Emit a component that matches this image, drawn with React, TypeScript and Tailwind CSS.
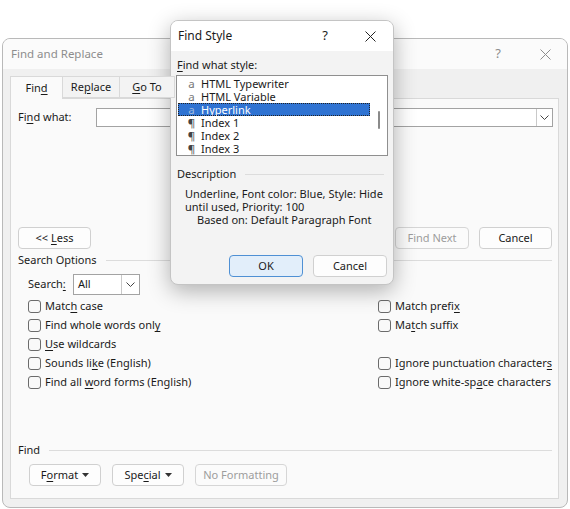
import type { ReactNode } from "react";

function CloseIcon({ className = "" }: { className?: string }) {
    return (
        <svg width="11" height="11" viewBox="0 0 11 11" className={className}>
            <path d="M0.5 0.5 L10.5 10.5 M10.5 0.5 L0.5 10.5" stroke="currentColor" strokeWidth="1" fill="none" />
        </svg>
    );
}

function Chevron() {
    return (
        <svg width="9" height="5" viewBox="0 0 9 5">
            <path d="M0.5 0.5 L4.5 4.5 L8.5 0.5" stroke="#444" strokeWidth="1" fill="none" />
        </svg>
    );
}

function Caret() {
    return (
        <svg width="7" height="4" viewBox="0 0 7 4" className="ml-[4px]">
            <path d="M0 0 H7 L3.5 4 Z" fill="#333" />
        </svg>
    );
}

function Btn({ children, className = "", disabled = false }: { children: ReactNode; className?: string; disabled?: boolean }) {
    return (
        <div
            className={`flex items-center justify-center h-[22px] rounded-[4px] border whitespace-nowrap ${
                disabled ? "border-[#d6d6d6] text-[#9d9d9d] bg-[#fbfbfb]" : "border-[#d0d0d0] text-[#1a1a1a] bg-[#fdfdfd]"
            } ${className}`}
        >
            {children}
        </div>
    );
}

function Check({ children }: { children: ReactNode }) {
    return (
        <div className="flex items-center h-[19px] whitespace-nowrap">
            <div className="w-[13px] h-[13px] shrink-0 rounded-[3px] border border-[#6b6b6b] bg-[#f9f9f9]" />
            <span className="ml-[4px]">{children}</span>
        </div>
    );
}

function SectionLabel({ children }: { children: ReactNode }) {
    return (
        <div className="flex items-center h-[16px]">
            <span>{children}</span>
            <div className="flex-1 h-px bg-[#dcdcdc] ml-[9px]" />
        </div>
    );
}

const styles = [
    { icon: "a", name: "HTML Typewriter" },
    { icon: "a", name: "HTML Variable" },
    { icon: "a", name: "Hyperlink", selected: true },
    { icon: "¶", name: "Index 1" },
    { icon: "¶", name: "Index 2" },
    { icon: "¶", name: "Index 3" },
];

function FindStyleDialog() {
    return (
        <div className="absolute left-[170px] top-[20px] w-[224px] h-[265px] rounded-[8px] border border-[#c4c4c4] bg-[#f3f3f3] overflow-hidden shadow-[0_6px_22px_rgba(0,0,0,0.30)] flex flex-col">
            <div className="h-[30px] bg-white flex items-center pl-[7px] text-[#1a1a1a]">
                <span className="text-[12px]">Find Style</span>
                <span className="ml-auto text-[13px] mr-[37px]">?</span>
                <CloseIcon className="mr-[17px] text-[#222]" />
            </div>
            <div className="flex-1 px-[5px] flex flex-col">
                <div className="mt-[6px] h-[16px] flex items-center pl-[1px]">
                    <span>
                        <u className="underline-offset-2">F</u>ind what style:
                    </span>
                </div>
                <div className="mt-[2px] h-[81px] w-[212px] border border-[#8f8f8f] bg-white flex">
                    <div className="flex-1 pt-[1px] pl-[1px]">
                        {styles.map((s) => (
                            <div
                                key={s.name}
                                className={`h-[13px] flex items-center leading-[13px] ${
                                    s.selected ? "bg-[#2f73d2] text-white outline-1 outline-dotted outline-[#222] -outline-offset-1" : ""
                                }`}
                            >
                                <span
                                    className={`w-[23px] text-center text-[11.5px] leading-[13px] pl-[4px] ${
                                        s.selected ? "text-[#9fb9dd]" : s.icon === "a" ? "text-[#777]" : "text-[#444]"
                                    }`}
                                >
                                    {s.icon}
                                </span>
                                <span>{s.name}</span>
                            </div>
                        ))}
                    </div>
                    <div className="w-[17px] flex justify-center">
                        <div className="mt-[35px] w-[2px] h-[18px] rounded-full bg-[#8a8a8a]" />
                    </div>
                </div>
                <div className="mt-[10px] pl-[1px] pr-[4px]">
                    <SectionLabel>Description</SectionLabel>
                </div>
                <div className="mt-[5px] pl-[9px] leading-[13px] whitespace-nowrap">
                    <div>Underline, Font color: Blue, Style: Hide</div>
                    <div>until used, Priority: 100</div>
                    <div className="pl-[12px]">Based on: Default Paragraph Font</div>
                </div>
                <div className="mt-auto mb-[7px] flex justify-end gap-[10px] pr-[1px]">
                    <div className="w-[74px] h-[22px] rounded-[4px] border border-[#4f90d4] bg-[#e2eefa] flex items-center justify-center">
                        OK
                    </div>
                    <Btn className="w-[74px]">Cancel</Btn>
                </div>
            </div>
        </div>
    );
}

export default function App() {
    return (
        <div className="relative min-h-screen bg-white pt-[38px] pl-[2px] text-[11px] text-[#1a1a1a] font-['Noto_Sans',sans-serif]">
            <div className="w-[566px] h-[470px] rounded-[8px] border border-[#b9b9b9] bg-[#f0f0f0] overflow-hidden flex flex-col">
                <div className="h-[30px] bg-[#fbfbfb] flex items-center pl-[8px] text-[#8d8d8d]">
                    <span className="text-[11.5px]">Find and Replace</span>
                    <span className="ml-auto text-[13px] mr-[39px]">?</span>
                    <CloseIcon className="mr-[16px] text-[#8d8d8d]" />
                </div>
                <div className="flex-1 pt-[7px] pl-[7px] pr-[8px] pb-[8px] flex flex-col">
                    <div className="flex h-[22px] relative z-10">
                        <div className="w-[53px] h-[23px] border border-b-0 border-[#d9d9d9] bg-[#fafafa] flex items-center justify-center">
                            <span>
                                Fin<u className="underline-offset-2">d</u>
                            </span>
                        </div>
                        <div className="w-[57px] border border-l-0 border-[#d9d9d9] bg-[#f3f3f3] flex items-center justify-center">
                            <span>
                                Re<u className="underline-offset-2">p</u>lace
                            </span>
                        </div>
                        <div className="w-[55px] border border-l-0 border-[#d9d9d9] bg-[#f3f3f3] flex items-center justify-center">
                            <span>
                                <u className="underline-offset-2">G</u>o To
                            </span>
                        </div>
                    </div>
                    <div className="flex-1 border border-[#d9d9d9] bg-[#fafafa] pl-[7px] pr-[5px] flex flex-col">
                        <div className="mt-[9px] flex items-center h-[19px]">
                            <span className="w-[78px]">
                                Fi<u className="underline-offset-2">n</u>d what:
                            </span>
                            <div className="flex-1 h-[19px] border border-[#a3a3a3] bg-white flex justify-end">
                                <div className="w-[16px] border-l border-[#c9c9c9] flex items-center justify-center">
                                    <Chevron />
                                </div>
                            </div>
                        </div>
                        <div className="mt-[100px] flex items-center pr-[1px]">
                            <Btn className="w-[73px]">
                                &lt;&lt;&nbsp;<u className="underline-offset-2">L</u>ess
                            </Btn>
                            <Btn className="w-[74px] ml-auto" disabled>
                                Find Next
                            </Btn>
                            <Btn className="w-[73px] ml-[10px]">Cancel</Btn>
                        </div>
                        <div className="mt-[3px] pr-[1px]">
                            <SectionLabel>Search Options</SectionLabel>
                        </div>
                        <div className="mt-[6px] pl-[10px] flex items-center h-[21px]">
                            <span className="w-[45px]">
                                Search<u className="underline-offset-2">:</u>
                            </span>
                            <div className="w-[67px] h-[21px] border border-[#a3a3a3] bg-white flex">
                                <span className="flex-1 pl-[4px] flex items-center">All</span>
                                <div className="w-[18px] border-l border-[#c9c9c9] flex items-center justify-center">
                                    <Chevron />
                                </div>
                            </div>
                        </div>
                        <div className="mt-[2px] pl-[10px] grid grid-cols-[350px_1fr]">
                            <Check>
                                Matc<u className="underline-offset-2">h</u> case
                            </Check>
                            <Check>
                                Match prefi<u className="underline-offset-2">x</u>
                            </Check>
                            <Check>
                                Find whole words onl<u className="underline-offset-2">y</u>
                            </Check>
                            <Check>
                                Ma<u className="underline-offset-2">t</u>ch suffix
                            </Check>
                            <Check>
                                <u className="underline-offset-2">U</u>se wildcards
                            </Check>
                            <div />
                            <Check>
                                Sounds li<u className="underline-offset-2">k</u>e (English)
                            </Check>
                            <Check>
                                Ignore punctuation character<u className="underline-offset-2">s</u>
                            </Check>
                            <Check>
                                Find all <u className="underline-offset-2">w</u>ord forms (English)
                            </Check>
                            <Check>
                                Ignore white-sp<u className="underline-offset-2">a</u>ce characters
                            </Check>
                        </div>
                        <div className="mt-[50px] pr-[1px]">
                            <SectionLabel>Find</SectionLabel>
                        </div>
                        <div className="mt-[6px] pl-[11px] flex items-center">
                            <Btn className="w-[72px]">
                                F<u className="underline-offset-2">o</u>rmat
                                <Caret />
                            </Btn>
                            <Btn className="w-[72px] ml-[11px]">
                                Spe<u className="underline-offset-2">c</u>ial
                                <Caret />
                            </Btn>
                            <Btn className="w-[92px] ml-[11px]" disabled>
                                No Formatting
                            </Btn>
                        </div>
                    </div>
                </div>
            </div>
            <FindStyleDialog />
        </div>
    );
}
